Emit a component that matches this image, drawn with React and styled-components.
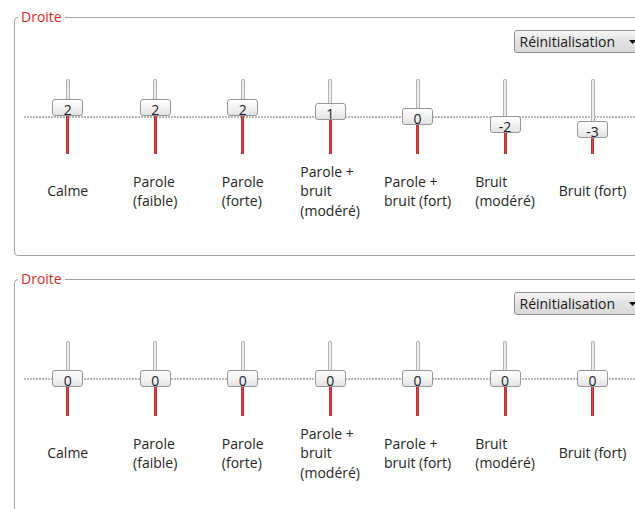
import React from "react";
import styled, { createGlobalStyle } from "styled-components";

const Global = createGlobalStyle`
  html, body { margin: 0; padding: 0; background: #fff; overflow: hidden; }
  body { font-family: "Open Sans", "Noto Sans", sans-serif; }
`;

const Page = styled.div`
  width: 635px;
  height: 509px;
  overflow: hidden;
  padding: 8px 0 0 14px;
  box-sizing: border-box;
  display: flex;
  flex-direction: column;
  gap: 14px;
`;

const Panel = styled.fieldset`
  width: 660px;
  flex: none;
  margin: 0;
  padding: 0 0 34px 0;
  border: 1px solid #a3a3a3;
  border-radius: 4px;
  box-sizing: border-box;
`;

const Legend = styled.legend`
  margin-left: 3px;
  padding: 0 3px;
  font-size: 14px;
  line-height: 18px;
  color: #d42a2a;
`;

const Toolbar = styled.div`
  display: flex;
  justify-content: flex-end;
  padding: 4px 26px 0 0;
`;

const DropButton = styled.button`
  display: flex;
  align-items: center;
  gap: 14px;
  height: 23px;
  padding: 0 10px 0 4px;
  border: 1px solid #8f8f8f;
  border-radius: 3px;
  background: linear-gradient(#f6f6f6, #e2e2e2 50%, #d9d9d9);
  font-family: "Open Sans", "Noto Sans", sans-serif;
  font-size: 14px;
  color: #1a1a1a;
  box-sizing: border-box;
`;

const SliderRow = styled.div`
  display: grid;
  grid-template-columns: repeat(7, 87.47px);
  margin: 26px 0 0 9px;
  background-image: repeating-linear-gradient(to right, #b8b8b8 0 2px, transparent 2px 3px);
  background-size: 100% 2px;
  background-position: 0 37px;
  background-repeat: no-repeat;
`;

const Column = styled.div`
  display: flex;
  flex-direction: column;
  align-items: center;
`;

const Slider = styled.div`
  height: 75px;
  width: 31px;
  display: flex;
  flex-direction: column;
  align-items: center;
`;

const UpperTrack = styled.div`
  width: 4px;
  box-sizing: border-box;
  border: 1px solid #b2b2b2;
  border-bottom: none;
  border-radius: 2px 2px 0 0;
  background: #ececec;
  flex: none;
`;

const Thumb = styled.div`
  width: 31px;
  height: 17px;
  flex: none;
  box-sizing: border-box;
  border: 1px solid #979797;
  border-radius: 3px;
  background: linear-gradient(#fefefe, #f0f0f0 60%, #e2e2e2);
  font-size: 14px;
  line-height: 17px;
  color: #1c1c2c;
  text-align: center;
  padding-top: 1px;
`;

const LowerTrack = styled.div`
  width: 3px;
  flex: 1;
  background: linear-gradient(to right, #a82828, #d44a4a, #a82828);
`;

const LabelArea = styled.div`
  height: 60px;
  margin-top: 7px;
  display: flex;
  align-items: center;
  justify-content: center;
`;

const Label = styled.div`
  font-size: 14px;
  line-height: 19.5px;
  color: #262626;
  text-align: left;
  white-space: nowrap;
`;

const Arrow = () => (
  <svg width="7" height="4" viewBox="0 0 7 4">
    <path d="M0 0 L7 0 L3.5 4 Z" fill="#111" />
  </svg>
);

const CENTER = 28.5;
const UNIT = 4.4;

function EqSlider({ value, lines }) {
  const top = CENTER - value * UNIT;
  return (
    <Column>
      <Slider>
        <UpperTrack style={{ height: `${top}px` }} />
        <Thumb>{value}</Thumb>
        <LowerTrack />
      </Slider>
      <LabelArea>
        <Label>
          {lines.map((l, i) => (
            <div key={i}>{l}</div>
          ))}
        </Label>
      </LabelArea>
    </Column>
  );
}

const LABELS = [
  ["Calme"],
  ["Parole", "(faible)"],
  ["Parole", "(forte)"],
  ["Parole +", "bruit", "(modéré)"],
  ["Parole +", "bruit (fort)"],
  ["Bruit", "(modéré)"],
  ["Bruit (fort)"],
];

function EqPanel({ values }) {
  return (
    <Panel>
      <Legend>Droite</Legend>
      <Toolbar>
        <DropButton>
          Réinitialisation
          <Arrow />
        </DropButton>
      </Toolbar>
      <SliderRow>
        {LABELS.map((lines, i) => (
          <EqSlider key={i} value={values[i]} lines={lines} />
        ))}
      </SliderRow>
    </Panel>
  );
}

export default function App() {
  return (
    <>
      <Global />
      <Page>
        <EqPanel values={[2, 2, 2, 1, 0, -2, -3]} />
        <EqPanel values={[0, 0, 0, 0, 0, 0, 0]} />
      </Page>
    </>
  );
}
